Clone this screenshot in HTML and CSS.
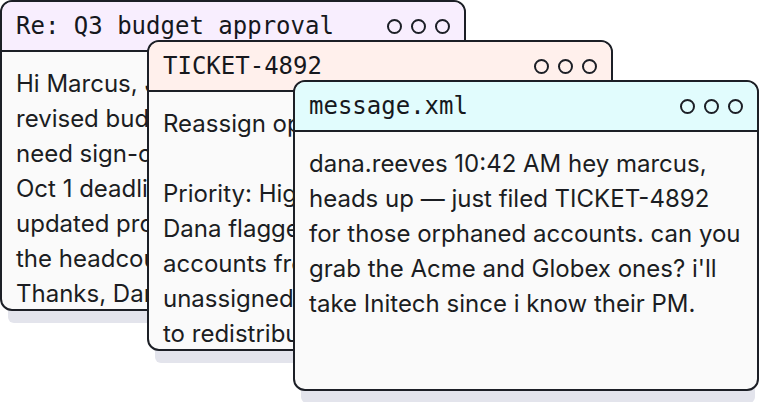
FILE: index.html
```html
<!DOCTYPE html>
<html lang="en">
<head>
  <meta charset="UTF-8" />
  <meta name="viewport" content="width=device-width, initial-scale=1.0"/>
  <title>Windows</title>
  <link rel="stylesheet" href="styles.css">
</head>
<body>
  <div class="desk">

    <div class="win win-email">
      <div class="win-bar">
        <span class="win-title">Re: Q3 budget approval</span>
        <span class="dots"><i></i><i></i><i></i></span>
      </div>
      <div class="win-body">
        Hi Marcus, Just sending over the<br>
        revised budget for Q3. We'll<br>
        need sign-off before the<br>
        Oct 1 deadline. I've attached<br>
        updated projections and<br>
        the headcount plan.<br>
        Thanks, Dana
      </div>
    </div>

    <div class="win win-ticket">
      <div class="win-bar">
        <span class="win-title">TICKET-4892</span>
        <span class="dots"><i></i><i></i><i></i></span>
      </div>
      <div class="win-body">
        Reassign open accounts<br>
        <br>
        Priority: High<br>
        Dana flagged several<br>
        accounts from the Q3 audit as<br>
        unassigned. Marcus and Dana<br>
        to redistribute by Friday.
      </div>
    </div>

    <div class="win win-chat">
      <div class="win-bar">
        <span class="win-title">message.xml</span>
        <span class="dots"><i></i><i></i><i></i></span>
      </div>
      <div class="win-body">
        dana.reeves 10:42 AM hey marcus,<br>
        heads up — just filed TICKET-4892<br>
        for those orphaned accounts. can you<br>
        grab the Acme and Globex ones? i'll<br>
        take Initech since i know their PM.
      </div>
    </div>

  </div>
</body>
</html>
```

FILE: styles.css
```css
body {
  margin: 0;
  background: #fff;
  font-family: 'Inter', 'Noto Sans', sans-serif;
  color: #1b1d22;
}
.desk {
  position: relative;
  width: 760px;
  height: 402px;
}

/* windows stacked on the desk */
.win {
  position: absolute;
  width: 466px;
  height: 311px;
  box-sizing: border-box;
  display: flex;
  flex-direction: column;
  border: 2px solid #1c1f26;
  border-radius: 12px;
  background: #fafafa;
  overflow: hidden;
  box-shadow: 2px 18px 0 -6px #e3e4ec;
}
.win-email  { left: 0;     top: 0; }
.win-ticket { left: 147px; top: 40px; }
.win-chat   { left: 293px; top: 80px; }

.win-bar {
  height: 48px;
  flex: none;
  display: flex;
  align-items: center;
  justify-content: space-between;
  padding: 0 14px;
  border-bottom: 2px solid #1c1f26;
}
.win-email .win-bar  { background: #f8eefe; }
.win-ticket .win-bar { background: #fff0ec; }
.win-chat .win-bar   { background: #e1fcfd; }

.win-title {
  font-family: 'DejaVu Sans Mono', 'Liberation Mono', monospace;
  font-size: 24px;
  color: #16181d;
}
.dots {
  display: flex;
  gap: 9px;
}
.dots i {
  width: 15px;
  height: 15px;
  box-sizing: border-box;
  border: 2px solid #1c1f26;
  border-radius: 50%;
}

.win-body {
  padding: 14px 14px 0;
  font-size: 24px;
  line-height: 35px;
  white-space: nowrap;
}
```
